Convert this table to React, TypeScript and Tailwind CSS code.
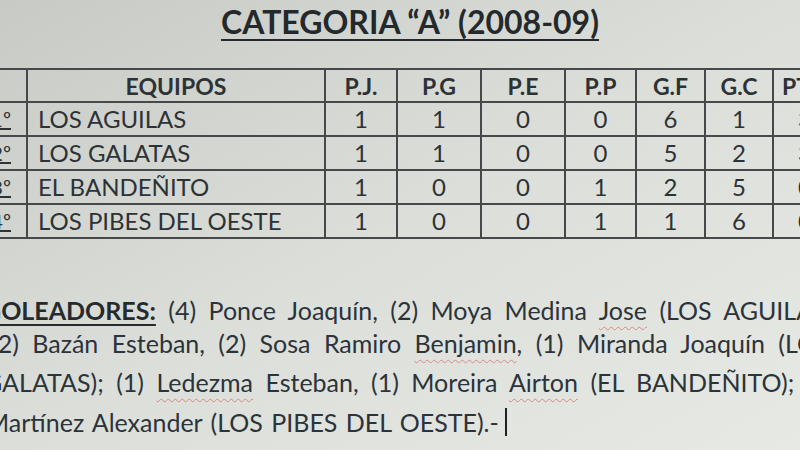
import React from 'react';

const rows = [
  { name: 'LOS AGUILAS', vals: ['1', '1', '0', '0', '6', '1', '3'] },
  { name: 'LOS GALATAS', vals: ['1', '1', '0', '0', '5', '2', '3'] },
  { name: 'EL BANDEÑITO', vals: ['1', '0', '0', '1', '2', '5', '0'] },
  { name: 'LOS PIBES DEL OESTE', vals: ['1', '0', '0', '1', '1', '6', '0'] },
];

const heads = ['P.J.', 'P.G', 'P.E', 'P.P', 'G.F', 'G.C', 'PTS'];
const widths = ['w-[72px]', 'w-[84px]', 'w-[84px]', 'w-[71px]', 'w-[69px]', 'w-[68px]', 'w-[60px]'];

const Squiggle: React.FC<{ children: React.ReactNode }> = ({ children }) => (
  <span className="underline decoration-wavy decoration-[#d58a86] decoration-1 underline-offset-[6px]">{children}</span>
);

const App: React.FC = () => {
  return (
    <div
      className="w-[800px] h-[450px] overflow-hidden bg-gradient-to-br from-[#c8cbc5] via-[#dcdfd9] to-[#e6e9e4] text-[#2d3236]"
      style={{ fontFamily: 'Lato, "Open Sans", sans-serif' }}
    >
      {/* titulo */}
      <div className="h-[68px] flex justify-center pl-[20px] pt-[4px]">
        <h1 className="text-[32px] leading-[36px] font-bold underline decoration-2 underline-offset-[5px] text-[#24292d]">
          CATEGORIA “A” (2008-09)
        </h1>
      </div>

      {/* tabla */}
      <table className="w-[846px] ml-[-14px] border-collapse table-fixed">
        <thead>
          <tr className="h-[33px]">
            <th className="w-[40px] border-2 border-[#45494c]"></th>
            <th className="w-[298px] border-2 border-[#45494c] text-[23px] leading-[28px] font-bold text-center">EQUIPOS</th>
            {heads.map((h, i) => (
              <th
                key={h}
                className={`${widths[i]} border-2 border-[#45494c] text-[23px] leading-[28px] font-bold ${i === 6 ? 'text-left pl-[8px]' : 'text-center'}`}
              >
                {h}
              </th>
            ))}
          </tr>
        </thead>
        <tbody>
          {rows.map((r, idx) => (
            <tr key={r.name} className="h-[34px]">
              <td className="border-2 border-[#45494c] text-[20px] leading-[28px] text-right pr-[15px] pl-0">
                <span className="underline">{idx + 1}º</span>
              </td>
              <td className="border-2 border-[#45494c] text-[24px] leading-[28px] pl-[10px]">{r.name}</td>
              {r.vals.map((v, i) => (
                <td
                  key={i}
                  className={`border-2 border-[#45494c] text-[24px] leading-[28px] ${i === 6 ? 'text-left pl-[24px]' : 'text-center'}`}
                >
                  {v}
                </td>
              ))}
            </tr>
          ))}
        </tbody>
      </table>

      {/* goleadores */}
      <div className="mt-[51px] text-[25px] text-[#2b333b] whitespace-nowrap">
        <div className="h-[40px] leading-[40px] ml-[-17px] [word-spacing:6px]">
          <span className="font-bold underline decoration-2 underline-offset-[4px] text-[#252a2e]">GOLEADORES:</span> (4) Ponce Joaquín, (2) Moya Medina <Squiggle>Jose</Squiggle> (LOS AGUILAS);
        </div>
        <div className="h-[40px] leading-[40px] mt-[-7px] ml-[-9px] [word-spacing:7px]">
          (2) Bazán Esteban, (2) Sosa Ramiro <Squiggle>Benjamin</Squiggle>, (1) Miranda Joaquín (LOS
        </div>
        <div className="h-[40px] leading-[40px] mt-[-1px] ml-[-16px] [word-spacing:6px]">
          GALATAS); (1) <Squiggle>Ledezma</Squiggle> Esteban, (1) Moreira <Squiggle>Airton</Squiggle> (EL BANDEÑITO); (1)
        </div>
        <div className="h-[40px] leading-[40px] ml-[-14px] [word-spacing:2px] flex items-center">
          <span>Martínez Alexander (LOS PIBES DEL OESTE).-</span>
          <span className="inline-block w-[2px] h-[28px] bg-[#1f2225] ml-[6px]"></span>
        </div>
      </div>
    </div>
  );
};

export default App;
